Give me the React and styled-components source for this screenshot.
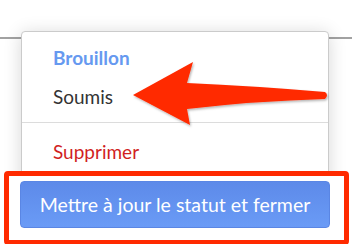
import React from "react";
import styled, { createGlobalStyle } from "styled-components";

const Global = createGlobalStyle`
  html, body { margin: 0; padding: 0; background: #fff; }
  body { font-family: Lato, "Open Sans", sans-serif; }
`;

const Page = styled.div`
  position: relative;
  width: 352px;
  height: 244px;
  overflow: hidden;
  background: #fff;
`;

const HeaderRule = styled.div`
  height: 37px;
  border-bottom: 2px solid #a2a2a2;
`;

const Menu = styled.div`
  position: absolute;
  left: 21px;
  top: 31px;
  width: 306px;
  height: 240px;
  background: #fff;
  border: 1px solid #cbcbcb;
  border-radius: 4px;
  box-shadow: 0 2px 18px rgba(0, 0, 0, 0.16);
  display: flex;
  flex-direction: column;
`;

const Section = styled.div`
  display: flex;
  flex-direction: column;
  padding-top: ${(p) => p.$top}px;
`;

const Item = styled.div`
  height: ${(p) => p.$h || 39}px;
  line-height: ${(p) => p.$h || 39}px;
  padding-left: 31px;
  font-size: 19px;
  font-weight: ${(p) => (p.$active ? 700 : 400)};
  color: ${(p) => p.$color};
`;

const Divider = styled.div`
  margin-top: 6px;
  height: 1px;
  background: #dcdcdc;
`;

const Highlight = styled.div`
  margin: 0 -21px 0 -18px;
  height: 59px;
  border: 5px solid #ff2a00;
  border-radius: 4px;
  background: #fff;
  padding: 5px 14px 0 11px;
  position: relative;
  z-index: 1;
`;

const Button = styled.button`
  display: block;
  width: 100%;
  height: 47px;
  border: 1px solid #5a86e4;
  border-radius: 4px;
  background: linear-gradient(#5d8ae9, #6a9bf6);
  color: #fff;
  font-family: Lato, "Open Sans", sans-serif;
  font-size: 19.5px;
  padding: 0;
`;

const Arrow = styled.svg`
  position: absolute;
  left: 0;
  top: 0;
  width: 352px;
  height: 244px;
  pointer-events: none;
  z-index: 2;
`;

export default function App() {
  return (
    <>
      <Global />
      <Page>
        <HeaderRule />
        <Menu>
          <Section $top={6}>
            <Item $active $color="#6699f0">Brouillon</Item>
            <Item $color="#333">Soumis</Item>
          </Section>
          <Divider />
          <Section $top={10}>
            <Item $h={38} $color="#d11f1f">Supprimer</Item>
          </Section>
          <Highlight>
            <Button>Mettre à jour le statut et fermer</Button>
          </Highlight>
        </Menu>
        <Arrow viewBox="0 0 352 244">
          <defs>
            <filter id="sh" x="-10%" y="-30%" width="120%" height="160%">
              <feDropShadow dx="1" dy="1.5" stdDeviation="1.2" floodColor="#000" floodOpacity="0.3" />
            </filter>
          </defs>
          <path
            d="M133 95 L193 62 L187 83 Q255 86 325 92 Q329 95 325 99 Q255 101 187 109 L190 125 Z"
            fill="#ff2a00"
            filter="url(#sh)"
          />
        </Arrow>
      </Page>
    </>
  );
}
